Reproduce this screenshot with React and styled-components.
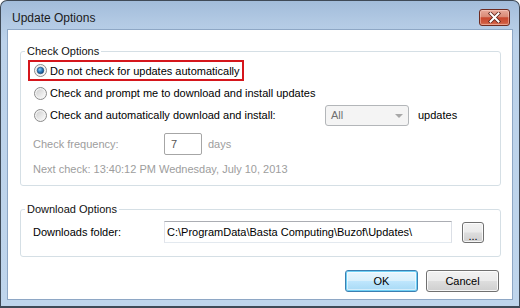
import React, { useId } from "react";
import styled, { createGlobalStyle } from "styled-components";

const GlobalStyle = createGlobalStyle`
  html, body { margin: 0; padding: 0; background: #ffffff; }
  body { font-family: "Liberation Sans", Arial, sans-serif; font-size: 11px; color: #000; }
  * { box-sizing: border-box; }
`;

const Window = styled.div`
  width: 520px;
  height: 308px;
  display: flex;
  flex-direction: column;
  border: 1px solid #3f4a57;
  border-bottom-width: 2px;
  border-radius: 7px 7px 0 0;
  background: linear-gradient(to bottom, #a2bcda 0px, #b3cae4 22px, #bcd2ea 40px, #bfd5ec 100%);
  overflow: hidden;
`;

const TitleBar = styled.div`
  height: 28px;
  flex: none;
  display: flex;
  align-items: center;
  padding: 5px 9px 0 11px;
`;

const Title = styled.div`
  flex: 1;
  font-family: "Liberation Sans", Arial, sans-serif;
  font-size: 12px;
  color: #1b1b1b;
`;

const CloseButton = styled.button`
  width: 31px;
  height: 17px;
  padding: 0;
  border: 1px solid #6e2b20;
  border-radius: 3px;
  background: linear-gradient(to bottom, #e8aa9b 0%, #d98a76 45%, #c8472e 52%, #cf5a3f 85%, #dc7a5e 100%);
  box-shadow: inset 0 0 0 1px rgba(255, 220, 210, 0.45);
  display: flex;
  align-items: center;
  justify-content: center;
`;

const Client = styled.div`
  flex: 1;
  margin: 0 6px 6px 6px;
  border: 1px solid #8ea7c5;
  background: #ffffff;
  padding: 14px 11px 0 12px;
  display: flex;
  flex-direction: column;
`;

const Group = styled.fieldset`
  margin: ${(p) => p.$mt || 0}px 0 0 0;
  padding: ${(p) => p.$pt}px 8px ${(p) => p.$pb}px 7px;
  border: 1px solid #d5dfe5;
  border-radius: 3px;
  min-width: 0;
  display: flex;
  flex-direction: column;
`;

const Legend = styled.legend`
  padding: 0 2px;
  margin-left: -3px;
  line-height: 14px;
  font-size: 11px;
  color: #111;
`;

const HighlightRow = styled.div`
  align-self: flex-start;
  height: 21px;
  display: flex;
  align-items: center;
  gap: 3px;
  padding: 0 2px 0 4px;
  border: 2px solid #d5161c;
`;

const RadioRow = styled.div`
  height: 22px;
  margin-top: ${(p) => p.$mt || 0}px;
  display: flex;
  align-items: center;
  padding-left: 6px;
  gap: 3px;
`;

const RadioText = styled.span`
  white-space: nowrap;
  width: ${(p) => (p.$w ? `${p.$w}px` : "auto")};
`;

const Select = styled.div`
  width: 84px;
  height: 21px;
  border: 1px solid #b3b6b9;
  border-radius: 3px;
  background: #f4f4f4;
  display: flex;
  align-items: center;
  justify-content: space-between;
  padding: 0 5px 0 5px;
  color: #707070;
`;

const Arrow = styled.span`
  width: 0;
  height: 0;
  border-left: 4px solid transparent;
  border-right: 4px solid transparent;
  border-top: 4px solid #a8a8a8;
  margin-top: 1px;
`;

const After = styled.span`
  margin-left: ${(p) => p.$ml}px;
  color: ${(p) => (p.$disabled ? "#9d9d9d" : "#000")};
  white-space: nowrap;
`;

const FieldRow = styled.div`
  height: 22px;
  margin-top: ${(p) => p.$mt || 0}px;
  display: flex;
  align-items: center;
  padding-left: 5px;
`;

const Label = styled.span`
  width: 131px;
  flex: none;
  color: ${(p) => (p.$disabled ? "#9d9d9d" : "#000")};
  white-space: nowrap;
`;

const TextBox = styled.div`
  width: ${(p) => p.$w}px;
  height: 22px;
  flex: none;
  border: 1px solid ${(p) => (p.$disabled ? "#a6a6a6" : "#abadb3")};
  border-color: ${(p) => (p.$disabled ? "#a6a6a6" : "#abadb3 #dbdfe6 #e3e9ef #e2e3ea")};
  border-radius: ${(p) => (p.$disabled ? 2 : 0)}px;
  background: #fff;
  display: flex;
  align-items: center;
  padding-left: ${(p) => p.$pl}px;
  color: ${(p) => (p.$disabled ? "#555" : "#000")};
  white-space: nowrap;
  overflow: hidden;
`;

const InfoLine = styled.div`
  margin-top: 7px;
  line-height: 14px;
  padding-left: 5px;
  color: #9d9d9d;
`;

const ButtonRow = styled.div`
  margin-top: 13px;
  display: flex;
  justify-content: flex-end;
  gap: 8px;
  padding-right: 2px;
`;

const Button = styled.button`
  width: ${(p) => p.$w}px;
  height: ${(p) => p.$h}px;
  margin-left: ${(p) => p.$ml || 0}px;
  padding: 0;
  font-family: "Liberation Sans", Arial, sans-serif;
  font-size: 11px;
  color: #000;
  border-radius: 3px;
  border: 1px solid ${(p) => (p.$default ? "#3c7fb1" : "#707070")};
  background: ${(p) =>
    p.$default
      ? "linear-gradient(to bottom, #eaf6fd 0%, #d9f0fc 48%, #bee6fd 52%, #a7d9f5 100%)"
      : "linear-gradient(to bottom, #f2f2f2 0%, #ebebeb 48%, #dddddd 52%, #cfcfcf 100%)"};
  box-shadow: ${(p) =>
    p.$default
      ? "inset 0 0 0 1px #6fd0f5, inset 0 0 0 2px rgba(255,255,255,0.5)"
      : "inset 0 0 0 1px rgba(255,255,255,0.8)"};
  display: flex;
  align-items: ${(p) => p.$align || "center"};
  justify-content: center;
  line-height: 1;
`;

function Radio({ checked }) {
  const id = useId().replace(/:/g, "");
  return (
    <svg width="13" height="13" viewBox="0 0 13 13" style={{ flex: "none" }}>
      <defs>
        <linearGradient id={`f${id}`} x1="0" y1="0" x2="1" y2="1">
          <stop offset="0" stopColor="#cfcfcf" />
          <stop offset="1" stopColor="#fbfbfb" />
        </linearGradient>
        <radialGradient id={`b${id}`} cx="0.4" cy="0.35" r="0.7">
          <stop offset="0" stopColor="#8fd0fb" />
          <stop offset="0.5" stopColor="#2e7fc4" />
          <stop offset="1" stopColor="#133f6e" />
        </radialGradient>
      </defs>
      <circle cx="6.5" cy="6.5" r="6" fill="#f3f3f3" stroke="#8b8b8b" strokeWidth="1" />
      <circle cx="6.5" cy="6.5" r="4.3" fill={`url(#f${id})`} />
      {checked && <circle cx="6.5" cy="6.5" r="3.3" fill={`url(#b${id})`} stroke="#1b4a7a" strokeWidth="0.6" />}
    </svg>
  );
}

function CloseIcon() {
  return (
    <svg width="13" height="11" viewBox="0 0 13 11">
      <path d="M2.5 1.5 L10.5 9.5 M10.5 1.5 L2.5 9.5" stroke="#5a2018" strokeWidth="3.6" strokeLinecap="square" />
      <path d="M2.5 1.5 L10.5 9.5 M10.5 1.5 L2.5 9.5" stroke="#ffffff" strokeWidth="2" strokeLinecap="square" />
    </svg>
  );
}

export default function App() {
  return (
    <>
      <GlobalStyle />
      <Window>
        <TitleBar>
          <Title>Update Options</Title>
          <CloseButton aria-label="Close">
            <CloseIcon />
          </CloseButton>
        </TitleBar>
        <Client>
          <Group $pt={2} $pb={9}>
            <Legend>Check Options</Legend>
            <HighlightRow>
              <Radio checked />
              <RadioText>Do not check for updates automatically</RadioText>
            </HighlightRow>
            <RadioRow $mt={1}>
              <Radio />
              <RadioText>Check and prompt me to download and install updates</RadioText>
            </RadioRow>
            <RadioRow>
              <Radio />
              <RadioText $w={272}>Check and automatically download and install:</RadioText>
              <Select>
                <span>All</span>
                <Arrow />
              </Select>
              <After $ml={6}>updates</After>
            </RadioRow>
            <FieldRow $mt={7}>
              <Label $disabled>Check frequency:</Label>
              <TextBox $w={38} $pl={6} $disabled>7</TextBox>
              <After $ml={6} $disabled>days</After>
            </FieldRow>
            <InfoLine>Next check: 13:40:12 PM Wednesday, July 10, 2013</InfoLine>
          </Group>
          <Group $mt={16} $pt={5} $pb={13}>
            <Legend>Download Options</Legend>
            <FieldRow>
              <Label>Downloads folder:</Label>
              <TextBox $w={288} $pl={2}>C:\ProgramData\Basta Computing\Buzof\Updates\</TextBox>
              <Button $w={22} $h={21} $ml={10} $align="flex-end">...</Button>
            </FieldRow>
          </Group>
          <ButtonRow>
            <Button $w={73} $h={22} $default>OK</Button>
            <Button $w={73} $h={22}>Cancel</Button>
          </ButtonRow>
        </Client>
      </Window>
    </>
  );
}
